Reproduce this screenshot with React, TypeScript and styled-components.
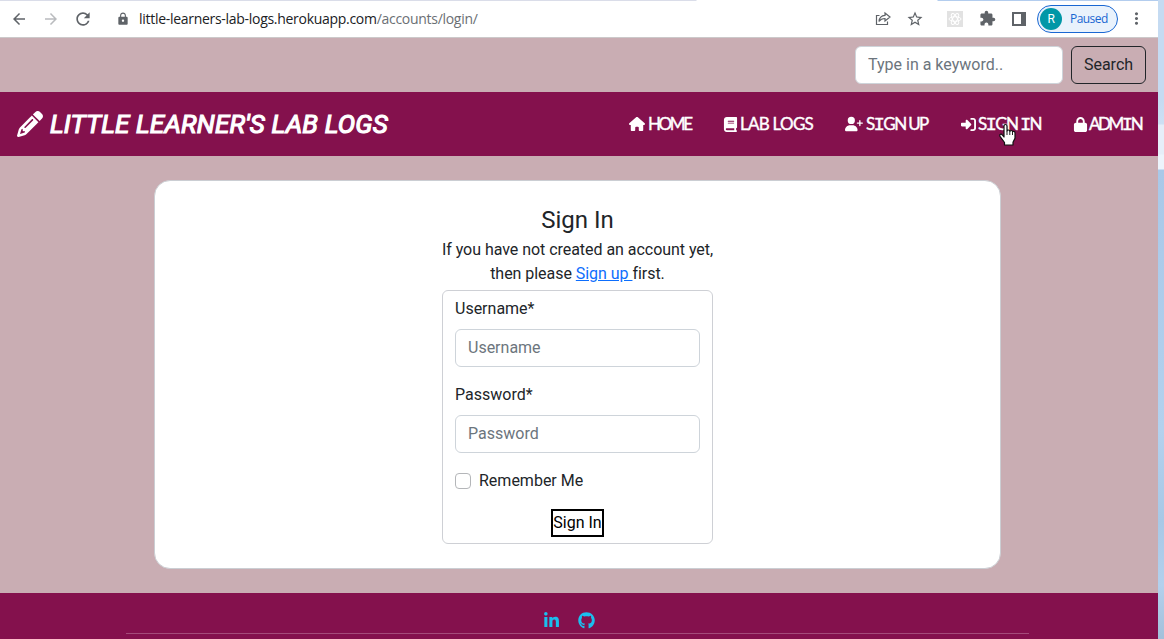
import React from 'react';
import styled, { createGlobalStyle } from 'styled-components';
import { FaPencil, FaHouse, FaBook, FaUserPlus, FaRightToBracket, FaLock, FaLinkedinIn, FaGithub } from 'react-icons/fa6';
import { MdArrowBack, MdArrowForward, MdRefresh, MdLock, MdExtension, MdMoreVert, MdStarBorder } from 'react-icons/md';

const GlobalStyle = createGlobalStyle`
  *, *::before, *::after { box-sizing: border-box; }
  body {
    margin: 0;
    overflow: hidden;
    font-family: Roboto, sans-serif;
    font-size: 16px;
    line-height: 24px;
    color: #212529;
  }
  svg { display: block; flex: none; }
`;

const Desktop = styled.div`
  height: 639px;
  padding-right: 6px;
  overflow: hidden;
  background: linear-gradient(180deg, #c5dbf2 0 100px, #cde0f4 124px, #e6eef9 125px 154px, #edf4fc 155px 169px, #a9c8e8 170px, #b3d1ee 430px, #a8c8e6 520px, #b3d0ed 585px, #a3c0da 639px);
`;
const Window = styled.div`
  display: flex;
  flex-direction: column;
  height: 639px;
  background: #c9adb3;
`;
const Toolbar = styled.header`
  display: flex;
  align-items: center;
  height: 38px;
  padding: 0 12px 0 10px;
  background: linear-gradient(90deg, #dadde9 0 696px, #fff 697px 937px, #b3cdee 938px) 0 0 / 100% 1px no-repeat #fff;
  border-bottom: 1px solid #ccc9ca;
  color: #5f6368;
`;
const ToolIcon = styled.span<{ $gap?: number; $color?: string }>`
  display: flex;
  margin-right: ${(p) => p.$gap ?? 0}px;
  color: ${(p) => p.$color ?? '#5f6368'};
`;
const Address = styled.div`
  flex: 1;
  font: 14px/20px 'Open Sans', 'Noto Sans', sans-serif;
  letter-spacing: -0.29px;
  color: #202124;
  white-space: nowrap;
`;
const Path = styled.span`
  color: #6b6f74;
`;
const Profile = styled.div`
  display: flex;
  align-items: center;
  gap: 8px;
  width: 81px;
  height: 28px;
  padding-left: 2px;
  margin-right: 9px;
  border: 1px solid #1967d2;
  border-radius: 14px;
  background: #e9f2fc;
  color: #1967d2;
  font: 12px/20px 'Open Sans', sans-serif;
  letter-spacing: -0.55px;
`;
const Avatar = styled.span`
  width: 22px;
  height: 22px;
  border-radius: 50%;
  background: #0097a7;
  color: #fff;
  font: 12px/22px Roboto, sans-serif;
  text-align: center;
`;
const SearchBar = styled.form`
  display: flex;
  justify-content: flex-end;
  gap: 8px;
  height: 54px;
  padding: 8px 12px;
`;
const TextInput = styled.input<{ $width: number }>`
  width: ${(p) => p.$width}px;
  height: 38px;
  padding: 5px 12px 7px;
  border: 1px solid #ced4da;
  border-radius: 6px;
  background: #fff;
  font: 16px/24px Roboto, sans-serif;
  &::placeholder { color: #6c757d; opacity: 1; }
`;
const SearchButton = styled.button`
  width: 75px;
  height: 38px;
  padding: 0;
  border: 1px solid #212529;
  border-radius: 6px;
  background: none;
  color: #212529;
  font: 16px/24px Roboto, sans-serif;
`;
const Navbar = styled.nav`
  display: flex;
  align-items: center;
  justify-content: space-between;
  height: 64px;
  padding: 0 16px 0 17px;
  background: #84114d;
  color: #fff;
`;
const Brand = styled.div`
  display: flex;
  align-items: center;
  gap: 7px;
  font-size: 26px;
  font-style: italic;
  letter-spacing: 0.2px;
  line-height: 32px;
  white-space: nowrap;
`;
const BrandName = styled.span`
  -webkit-text-stroke: 1.2px #fff;
`;
const Links = styled.div`
  display: flex;
`;
const NavLink = styled.a`
  position: relative;
  display: flex;
  align-items: center;
  gap: 3px;
  margin-left: 32px;
`;
const IconBox = styled.span<{ $width: number }>`
  display: flex;
  justify-content: center;
  width: ${(p) => p.$width}px;
`;
const NavText = styled.span<{ $width: number; $spacing: number }>`
  width: ${(p) => p.$width}px;
  font: 17px/24px Lato, sans-serif;
  letter-spacing: ${(p) => p.$spacing}px;
  -webkit-text-stroke: 0.4px #fff;
  white-space: nowrap;
`;
const SlabI = styled.span`
  font: 19px/20px 'Liberation Mono', monospace;
`;
const Cursor = styled.svg`
  position: absolute;
  left: 38px;
  top: 11px;
`;
const Main = styled.main`
  height: 437px;
  padding: 24px 0 0 154px;
`;
const Card = styled.section`
  display: flex;
  flex-direction: column;
  align-items: center;
  width: 847px;
  height: 389px;
  padding-top: 25px;
  border: 1px solid #cbced3;
  border-radius: 16px;
  background: #fff;
`;
const Title = styled.h1`
  margin: 0 0 3px;
  font-size: 24px;
  font-weight: 400;
  line-height: 29px;
`;
const Intro = styled.p`
  width: 280px;
  margin: 0 0 4px;
  letter-spacing: -0.04px;
  text-align: center;
`;
const SignupLink = styled.a`
  color: #0d6efd;
  text-decoration: underline;
  white-space: pre;
`;
const LoginForm = styled.form`
  display: flex;
  flex-direction: column;
  width: 271px;
  height: 254px;
  padding: 6px 12px 0;
  border: 1px solid #ced0d5;
  border-radius: 6px;
`;
const Label = styled.label`
  margin-bottom: 8px;
`;
const Field = styled.div`
  display: flex;
  flex-direction: column;
  margin-bottom: 16px;
`;
const CheckRow = styled.label`
  display: flex;
  align-items: center;
  gap: 8px;
  margin-bottom: 16px;
`;
const Checkbox = styled.input`
  appearance: none;
  width: 16px;
  height: 16px;
  margin: 0;
  border: 1px solid #b4b6b9;
  border-radius: 4px;
`;
const Submit = styled.button`
  align-self: center;
  width: 53px;
  height: 28px;
  padding: 0;
  border: 2px solid #000;
  background: #fff;
  color: #000;
  font: 16px/24px Roboto, sans-serif;
  white-space: nowrap;
`;
const Footer = styled.footer`
  height: 46px;
  padding: 19px 129px 0 126px;
  background: #84114d;
`;
const Social = styled.div`
  display: flex;
  justify-content: center;
  gap: 18px;
  height: 21px;
  padding-right: 17px;
  color: #1bbfee;
`;
const Rule = styled.hr`
  margin: 0;
  border: 0;
  border-top: 1px solid #a44c7a;
`;

const slab = (text: string) =>
  text.split('').map((c, i) => (c === 'I' ? <SlabI key={i}>I</SlabI> : c));

const links = [
  { text: 'HOME', icon: <FaHouse size={16} />, box: 16, width: 44, spacing: -2.4 },
  { text: 'LAB LOGS', icon: <FaBook size={15} />, box: 13, width: 73, spacing: -0.75 },
  { text: 'SIGN UP', icon: <FaUserPlus size={18} />, box: 18, width: 63, spacing: -1.65 },
  { text: 'SIGN IN', icon: <FaRightToBracket size={15} />, box: 14, width: 64, spacing: -1.7 },
  { text: 'ADMIN', icon: <FaLock size={15} />, box: 12, width: 53, spacing: -2.5 },
];

const HandCursor = () => (
  <Cursor width="17" height="23" viewBox="0 0 17 23">
    <path
      d="M5 14V3.2Q5 1.5 6.5 1.5T8 3.2V8q0-1 1.4-1 1.5 0 1.5 1.4 0-.9 1.3-.9 1.4 0 1.4 1.5 0-.7 1.2-.7 1.2 0 1.2 1.8v5.2l-2 4V22H5.5v-2.5L1 13.3q-.7-1.6.5-2.1 1.2-.4 2 .9z"
      fill="#fff" stroke="#101010" strokeWidth="1.2" strokeLinejoin="round"
    />
    <path d="M8 8v4M10.8 8.5V12M13.5 9v3" stroke="#222" strokeWidth="1" />
  </Cursor>
);

export default function App() {
  return (
    <Desktop>
      <GlobalStyle />
      <Window>
        <Toolbar>
          <ToolIcon $gap={14}><MdArrowBack size={18} /></ToolIcon>
          <ToolIcon $gap={13} $color="#b9bbbe"><MdArrowForward size={18} /></ToolIcon>
          <ToolIcon $gap={23}><MdRefresh size={20} /></ToolIcon>
          <ToolIcon $gap={9}><MdLock size={14} /></ToolIcon>
          <Address>little-learners-lab-logs.herokuapp.com<Path>/accounts/login/</Path></Address>
          <ToolIcon $gap={15}>
            <svg width="16" height="16" viewBox="0 0 16 16" fill="none" stroke="currentColor" strokeWidth="1.2">
              <path d="M4.5 4.5H1.5v9h11v-3M10 2l5 4-5 4V7.5C7 7.5 5.3 8.5 4 10.5 4.3 7 6 4.7 10 4.4z" />
            </svg>
          </ToolIcon>
          <ToolIcon $gap={23}><MdStarBorder size={18} /></ToolIcon>
          <ToolIcon $gap={16}>
            <svg width="16" height="16" viewBox="0 0 16 16" fill="none" stroke="#fff">
              <path d="M0 0h16v16H0z" fill="#e2e2e2" stroke="none" />
              <ellipse cx="8" cy="8" rx="6" ry="2.3" />
              <ellipse cx="8" cy="8" rx="6" ry="2.3" transform="rotate(60 8 8)" />
              <ellipse cx="8" cy="8" rx="6" ry="2.3" transform="rotate(120 8 8)" />
            </svg>
          </ToolIcon>
          <ToolIcon $gap={16}><MdExtension size={17} /></ToolIcon>
          <ToolIcon $gap={11}>
            <svg width="14" height="14" viewBox="0 0 14 14">
              <path d="M0 0h14v14H0zM2 2v10h7V2z" fill="currentColor" fillRule="evenodd" />
            </svg>
          </ToolIcon>
          <Profile><Avatar>R</Avatar>Paused</Profile>
          <ToolIcon><MdMoreVert size={19} /></ToolIcon>
        </Toolbar>
        <SearchBar>
          <TextInput $width={208} placeholder="Type in a keyword.." />
          <SearchButton type="button">Search</SearchButton>
        </SearchBar>
        <Navbar>
          <Brand><FaPencil size={26} /><BrandName>LITTLE LEARNER'S LAB LOGS</BrandName></Brand>
          <Links>
            {links.map((l) => (
              <NavLink key={l.text}>
                <IconBox $width={l.box}>{l.icon}</IconBox>
                <NavText $width={l.width} $spacing={l.spacing}>{slab(l.text)}</NavText>
                {l.text === 'SIGN IN' && <HandCursor />}
              </NavLink>
            ))}
          </Links>
        </Navbar>
        <Main>
          <Card>
            <Title>Sign In</Title>
            <Intro>
              If you have not created an account yet,<br />
              then please <SignupLink>{'Sign up '}</SignupLink>first.
            </Intro>
            <LoginForm>
              <Field>
                <Label>Username*</Label>
                <TextInput $width={245} placeholder="Username" />
              </Field>
              <Field>
                <Label>Password*</Label>
                <TextInput $width={245} type="password" placeholder="Password" />
              </Field>
              <CheckRow><Checkbox type="checkbox" />Remember Me</CheckRow>
              <Submit type="button">Sign In</Submit>
            </LoginForm>
          </Card>
        </Main>
        <Footer>
          <Social><FaLinkedinIn size={17} /><FaGithub size={17} /></Social>
          <Rule />
        </Footer>
      </Window>
    </Desktop>
  );
}
